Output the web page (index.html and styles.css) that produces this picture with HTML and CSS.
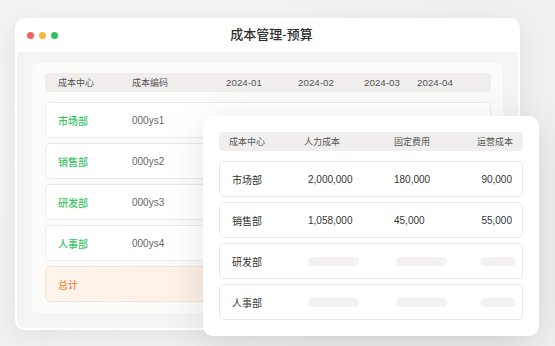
FILE: index.html
```html
<!DOCTYPE html>
<html lang="zh-CN">
<head>
  <meta charset="UTF-8" />
  <meta name="viewport" content="width=device-width, initial-scale=1.0" />
  <title>成本管理-预算</title>
  <link rel="stylesheet" href="styles.css">
</head>
<body>
  <div class="stage">
    <div class="window">
      <div class="titlebar">
        <div class="dots">
          <span class="dot red"></span>
          <span class="dot yellow"></span>
          <span class="dot green"></span>
        </div>
        <div class="title">成本管理-预算</div>
      </div>
      <div class="window-body">
        <div class="sheet">
          <div class="sheet-row sheet-head">
            <span>成本中心</span>
            <span>成本编码</span>
            <span class="month">2024-01</span>
            <span class="month">2024-02</span>
            <span class="month">2024-03</span>
            <span class="month">2024-04</span>
          </div>
          <div class="sheet-row sheet-item">
            <span class="dept">市场部</span>
            <span class="code">000ys1</span>
          </div>
          <div class="sheet-row sheet-item">
            <span class="dept">销售部</span>
            <span class="code">000ys2</span>
          </div>
          <div class="sheet-row sheet-item">
            <span class="dept">研发部</span>
            <span class="code">000ys3</span>
          </div>
          <div class="sheet-row sheet-item">
            <span class="dept">人事部</span>
            <span class="code">000ys4</span>
          </div>
          <div class="sheet-row sheet-item total">
            <span class="sum">总计</span>
          </div>
        </div>
      </div>
    </div>

    <div class="popup">
      <div class="pop-head">
        <span>成本中心</span>
        <span>人力成本</span>
        <span>固定费用</span>
        <span class="right">运营成本</span>
      </div>
      <div class="pop-rows">
        <div class="pop-row">
          <span>市场部</span>
          <span>2,000,000</span>
          <span>180,000</span>
          <span class="right">90,000</span>
        </div>
        <div class="pop-row">
          <span>销售部</span>
          <span>1,058,000</span>
          <span>45,000</span>
          <span class="right">55,000</span>
        </div>
        <div class="pop-row">
          <span>研发部</span>
          <span class="skeleton"></span>
          <span class="skeleton mid"></span>
          <span class="skeleton short"></span>
        </div>
        <div class="pop-row">
          <span>人事部</span>
          <span class="skeleton"></span>
          <span class="skeleton mid"></span>
          <span class="skeleton short"></span>
        </div>
      </div>
    </div>
  </div>
</body>
</html>
```

FILE: styles.css
```css
* {
  box-sizing: border-box;
}
body {
  margin: 0;
  font-family: "Liberation Sans", "Noto Sans CJK SC", sans-serif;
  background: #f1f1f1;
  color: #333;
}
.stage {
  position: relative;
  width: 555px;
  height: 346px;
  overflow: hidden;
  padding: 18px 0 0 15px;
  background: radial-gradient(circle at 30% 40%, #f7f7f7 0%, #f0f0f0 70%);
}
.window {
  width: 505px;
  height: 312px;
  background: #fff;
  border-radius: 10px;
  padding: 0 2px 2px;
  box-shadow: 0 6px 28px rgba(0, 0, 0, 0.07);
  display: flex;
  flex-direction: column;
}
.titlebar {
  height: 34px;
  position: relative;
  display: flex;
  align-items: center;
  padding-left: 10px;
}
.dots {
  display: flex;
  gap: 5px;
}
.dot {
  width: 7px;
  height: 7px;
  border-radius: 50%;
}
.dot.red { background: #f95f5a; }
.dot.yellow { background: #f9b43c; }
.dot.green { background: #2bc25c; }
.title {
  position: absolute;
  left: 0;
  right: 0;
  top: 0;
  line-height: 34px;
  text-align: center;
  padding-left: 8px;
  font-size: 13px;
  font-weight: 500;
  color: #2e2e2e;
}
.window-body {
  flex: 1;
  background: #f4f4f2;
  border-radius: 0 0 8px 8px;
  padding: 11px 15px 14px;
}
.sheet {
  background: #fbfbfa;
  border-radius: 6px;
  padding: 10px 12px 11px 13px;
  display: flex;
  flex-direction: column;
  gap: 5px;
}
.sheet-row {
  display: grid;
  grid-template-columns: 74px 94px 72px 66px 53px 1fr;
  align-items: center;
  padding-left: 13px;
}
.sheet-head {
  height: 19px;
  background: #efeeec;
  border-radius: 4px;
  font-size: 9px;
  color: #555;
  margin-bottom: 5px;
}
.month {
  font-size: 9.8px;
}
.sheet-item {
  height: 36px;
  background: #fff;
  border: 1px solid #ebebea;
  border-radius: 5px;
  font-size: 10px;
  padding-left: 12px;
}
.dept {
  color: #3bc466;
  font-weight: 500;
}
.code {
  color: #666;
}
.total {
  background: linear-gradient(90deg, #fdf4ec, #fbe8db);
  border-color: #f4e4d8;
}
.sum {
  color: #f28b4b;
  font-weight: 500;
}
.popup {
  position: absolute;
  left: 203px;
  top: 116px;
  width: 336px;
  background: #fff;
  border-radius: 10px;
  padding: 16px;
  box-shadow: 0 8px 40px rgba(0, 0, 0, 0.11);
}
.pop-head {
  height: 19px;
  background: #f0efed;
  border-radius: 4px;
  display: grid;
  grid-template-columns: 75px 90px 1fr auto;
  align-items: center;
  padding: 0 10px;
  font-size: 9px;
  color: #555;
  margin-bottom: 10px;
}
.pop-rows {
  display: flex;
  flex-direction: column;
  gap: 5px;
}
.pop-row {
  height: 36px;
  border: 1px solid #ebebeb;
  border-radius: 5px;
  display: grid;
  grid-template-columns: 76px 86px 1fr auto;
  align-items: center;
  padding: 0 10px 0 12px;
  font-size: 10px;
  color: #333;
}
.right {
  justify-self: end;
}
.skeleton {
  width: 51px;
  height: 9px;
  border-radius: 5px;
  background: #f3f2f0;
}
.skeleton.mid {
  margin-left: 2px;
}
.skeleton.short {
  width: 36px;
  justify-self: end;
  margin-right: -4px;
}
```
